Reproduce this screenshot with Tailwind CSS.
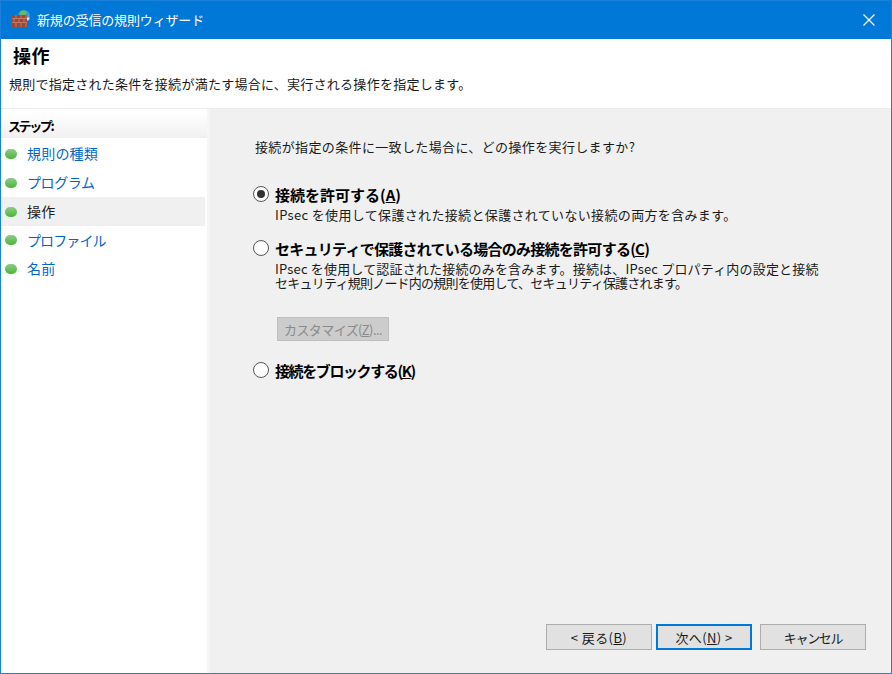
<!DOCTYPE html>
<html lang="ja">
<head>
    <meta charset="UTF-8">
    <title>新規の受信の規則ウィザード</title>
    <script src="https://cdn.jsdelivr.net/npm/@tailwindcss/browser@4"></script>
</head>
<body class="bg-white overflow-hidden font-['Noto_Sans_CJK_JP','Noto_Sans',sans-serif] text-[13px] leading-[13px] text-[#1a1a1a]">
    <div class="w-[892px] h-[674px] border border-[#1a80d8] flex flex-col">
        <!-- title bar -->
        <div class="h-[38px] bg-[#0078d7] flex items-center shrink-0">
            <svg class="ml-[11px] w-[20px] h-[20px]" viewBox="0 0 20 20">
                <circle cx="12" cy="6" r="6" fill="#3f9bd8"/>
                <path d="M8 2c2-2 5-2 6 0s-1 3-3 3-4-1-3-3z" fill="#6cc04a"/>
                <path d="M14 8c1-1 3-1 3.500 0s-1 3-2.500 2.500z" fill="#cfe8f5"/>
                <rect x="0" y="5" width="15" height="12" fill="#9c4636"/>
                <path d="M0 8.500h15M0 12.500h15M4 5v3.500M9 5v3.500M14 5v3.500M2 8.500v4M7 8.500v4M12 8.500v4M4 12.500V17M9 12.500V17M14 12.500V17" stroke="#c47a66" stroke-width="1" fill="none"/>
            </svg>
            <span class="ml-[5px] -mt-[2px] text-white text-[13px] tracking-[-0.15px]">新規の受信の規則ウィザード</span>
            <svg class="ml-auto mr-[16px] w-[12px] h-[12px]" viewBox="0 0 12 12">
                <path d="M0.500 0.500L11.500 11.500M11.500 0.500L0.500 11.500" stroke="#fff" stroke-width="1.200" fill="none"/>
            </svg>
        </div>

        <!-- header -->
        <div class="h-[70px] shrink-0 bg-white border-b border-[#ececec] pl-[8px]">
            <h1 class="pt-[7px] pl-[4px] text-[18px] leading-[18px] tracking-[0.4px] font-bold text-black">操作</h1>
            <p class="mt-[13px] text-[13px] tracking-[0.26px]">規則で指定された条件を接続が満たす場合に、実行される操作を指定します。</p>
        </div>

        <div class="flex-1 flex min-h-0">
            <!-- steps -->
            <div class="w-[206px] shrink-0 bg-white border-r-[3px] border-[#f6f6f6] pt-[4px] box-content">
                <div class="h-[25px] pl-[7px] flex items-center font-bold text-[13px] tracking-[-2.4px] text-black bg-gradient-to-b from-white to-[#f0f0f0]">ステップ:</div>
                <ul class="mt-[1px]">
                    <li class="h-[29px] w-[204px] flex items-center text-[#0066cc] text-[14px] tracking-[0.2px]"><span class="ml-[4px] mr-[10px] w-[12px] h-[10px] rounded-full bg-gradient-to-b from-[#8fc98a] to-[#43b82c]"></span>規則の種類</li>
                    <li class="h-[29px] w-[204px] flex items-center text-[#0066cc] text-[14px] tracking-[-0.4px]"><span class="ml-[4px] mr-[10px] w-[12px] h-[10px] rounded-full bg-gradient-to-b from-[#8fc98a] to-[#43b82c]"></span>プログラム</li>
                    <li class="h-[29px] w-[204px] flex items-center text-[14px] tracking-[0.2px] bg-[#f0f0f0]"><span class="ml-[4px] mr-[10px] w-[12px] h-[10px] rounded-full bg-gradient-to-b from-[#8fc98a] to-[#43b82c]"></span>操作</li>
                    <li class="h-[28px] w-[204px] flex items-center text-[#0066cc] text-[14px] tracking-[-0.9px]"><span class="ml-[4px] mr-[10px] w-[12px] h-[10px] rounded-full bg-gradient-to-b from-[#8fc98a] to-[#43b82c]"></span>プロファイル</li>
                    <li class="h-[29px] w-[204px] flex items-center text-[#0066cc] text-[14px] tracking-[0.2px]"><span class="ml-[4px] mr-[10px] w-[12px] h-[10px] rounded-full bg-gradient-to-b from-[#8fc98a] to-[#43b82c]"></span>名前</li>
                </ul>
            </div>

            <!-- content -->
            <div class="flex-1 bg-[#f0f0f0] flex flex-col pl-[45px] pt-[31px] pb-[23px] pr-[25px]">
                <p class="text-[13px] tracking-[0.36px]">接続が指定の条件に一致した場合に、どの操作を実行しますか?</p>

                <div class="mt-[32px]">
                    <label class="flex items-center gap-[6px] -ml-[2px] h-[18px]">
                        <span class="w-[16px] h-[16px] rounded-full border border-[#555] bg-white flex items-center justify-center"><span class="w-[8px] h-[8px] rounded-full bg-[#333]"></span></span>
                        <span class="font-bold text-[15px] tracking-[0px] text-black">接続を許可する(<span class="underline">A</span>)</span>
                    </label>
                    <p class="mt-[5px] ml-[20px] text-[13px] leading-[13px] tracking-[0.34px]">IPsec を使用して保護された接続と保護されていない接続の両方を含みます。</p>
                </div>

                <div class="mt-[18px]">
                    <label class="flex items-center gap-[6px] -ml-[2px] h-[18px]">
                        <span class="w-[16px] h-[16px] rounded-full border border-[#555] bg-white"></span>
                        <span class="font-bold text-[15px] tracking-[-0.74px] text-black">セキュリティで保護されている場合のみ接続を許可する(<span class="underline">C</span>)</span>
                    </label>
                    <p class="mt-[5px] ml-[20px] text-[13px] leading-[14px]"><span class="tracking-[0.18px]">IPsec を使用して認証された接続のみを含みます。接続は、IPsec プロパティ内の設定と接続</span><br><span class="tracking-[-0.76px]">セキュリティ規則ノード内の規則を使用して、セキュリティ保護されます。</span></p>
                </div>

                <button class="mt-[27px] ml-[22px] w-[112px] h-[24px] bg-[#cccccc] border border-[#bfbfbf] text-[#8a8a8a] text-[13px] tracking-[-0.6px] flex items-center justify-center">カスタマイズ(<span class="underline">Z</span>)...</button>

                <label class="mt-[20px] flex items-center gap-[6px] -ml-[2px] h-[18px]">
                    <span class="w-[16px] h-[16px] rounded-full border border-[#555] bg-white"></span>
                    <span class="font-bold text-[15px] tracking-[-1.4px] text-black">接続をブロックする(<span class="underline">K</span>)</span>
                </label>

                <div class="mt-auto flex justify-end">
                    <button class="w-[106px] h-[26px] bg-[#e1e1e1] border border-[#adadad] text-[13px] tracking-[0.4px] flex items-center justify-center">&lt; 戻る(<span class="underline">B</span>)</button>
                    <button class="ml-[4px] w-[96px] h-[26px] bg-[#e1e1e1] border-2 border-[#0078d7] text-[13px] tracking-[0.4px] flex items-center justify-center">次へ(<span class="underline">N</span>) &gt;</button>
                    <button class="ml-[8px] w-[106px] h-[26px] bg-[#e1e1e1] border border-[#adadad] text-[13px] tracking-[-1.3px] flex items-center justify-center">キャンセル</button>
                </div>
            </div>
        </div>
    </div>
</body>
</html>
